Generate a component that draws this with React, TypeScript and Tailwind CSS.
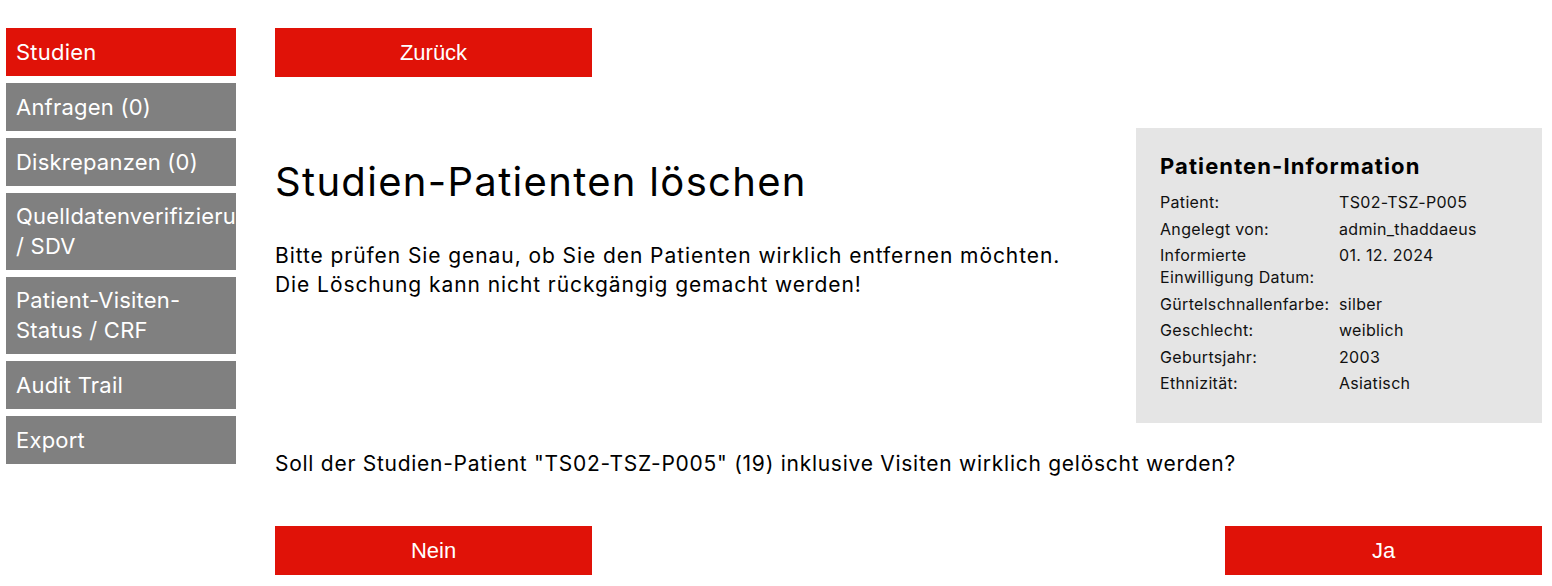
const font = { fontFamily: "Inter, 'Noto Sans', sans-serif" };

const navItems = [
  { label: "Studien", active: true },
  { label: "Anfragen (0)" },
  { label: "Diskrepanzen (0)" },
  { label: "Quelldatenverifizierung / SDV" },
  { label: "Patient-Visiten-Status / CRF" },
  { label: "Audit Trail" },
  { label: "Export" },
];

const info: [string, string][] = [
  ["Patient:", "TS02-TSZ-P005"],
  ["Angelegt von:", "admin_thaddaeus"],
  ["Informierte Einwilligung Datum:", "01. 12. 2024"],
  ["Gürtelschnallenfarbe:", "silber"],
  ["Geschlecht:", "weiblich"],
  ["Geburtsjahr:", "2003"],
  ["Ethnizität:", "Asiatisch"],
];

function RedButton({ children }: { children: string }) {
  return (
    <button
      className="w-[317px] h-[49px] bg-[#e01208] text-white text-[22px]"
      style={{ fontFamily: "'Liberation Sans', Arial, sans-serif" }}
    >
      {children}
    </button>
  );
}

export default function App() {
  return (
    <div className="flex bg-white text-black min-h-[586px]" style={font}>
      <nav className="w-[230px] ml-[6px] mt-[28px] flex flex-col gap-[7px] shrink-0">
        {navItems.map((item) => (
          <div
            key={item.label}
            className={`px-[10px] py-[9px] text-[22px] leading-[30px] tracking-[0.01em] text-white overflow-hidden ${
              item.active ? "bg-[#e01208]" : "bg-[#808080]"
            }`}
          >
            {item.label === "Quelldatenverifizierung / SDV" ? (
              <div className="leading-[29.5px]">
                <div className="whitespace-nowrap">Quelldatenverifizierung</div>
                <div>/ SDV</div>
              </div>
            ) : item.label === "Patient-Visiten-Status / CRF" ? (
              <div className="leading-[29.5px]">
                <div>Patient-Visiten-</div>
                <div>Status / CRF</div>
              </div>
            ) : (
              item.label
            )}
          </div>
        ))}
      </nav>

      <main className="flex-1 ml-[39px] mr-[10px] mt-[28px] flex flex-col">
        <div>
          <RedButton>Zurück</RedButton>
        </div>

        <div className="flex justify-between mt-[51px]">
          <div className="pt-[26px]">
            <h1 className="text-[40px] leading-[56px] font-normal tracking-[0.033em]">
              Studien-Patienten löschen
            </h1>
            <p className="mt-[31px] text-[21px] leading-[29px] tracking-[0.044em]">
              Bitte prüfen Sie genau, ob Sie den Patienten wirklich entfernen möchten.
              <br />
              Die Löschung kann nicht rückgängig gemacht werden!
            </p>
          </div>

          <aside className="w-[406px] h-[295px] bg-[#e5e5e5] px-[24px] pt-[22px]">
            <h2 className="text-[22px] font-bold leading-[32px] mb-[9px] tracking-[0.05em]">
              Patienten-Information
            </h2>
            <div className="flex flex-col gap-[4.5px] text-[16px] leading-[22px] tracking-[0.02em] text-[#111]">
              {info.map(([k, v]) => (
                <div key={k} className="flex">
                  <div className="w-[179px] shrink-0 pr-[6px]">{k}</div>
                  <div>{v}</div>
                </div>
              ))}
            </div>
          </aside>
        </div>

        <p className="mt-[26px] text-[21px] leading-[29px] tracking-[0.035em]">
          Soll der Studien-Patient "TS02-TSZ-P005" (19) inklusive Visiten wirklich gelöscht werden?
        </p>

        <div className="flex justify-between mt-[48px]">
          <RedButton>Nein</RedButton>
          <RedButton>Ja</RedButton>
        </div>
      </main>
    </div>
  );
}
